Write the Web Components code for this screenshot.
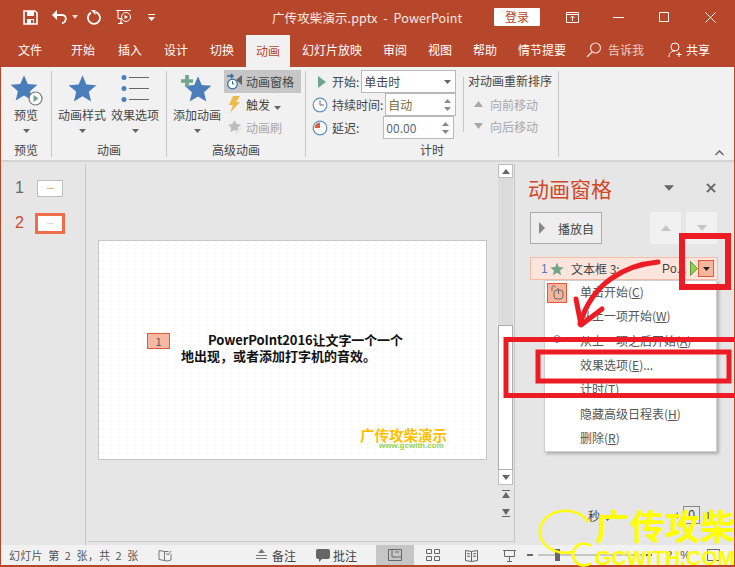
<!DOCTYPE html>
<html lang="zh">
<head>
<meta charset="utf-8">
<title>PowerPoint</title>
<style>
html,body{margin:0;padding:0;width:735px;height:567px;overflow:hidden;background:#e6e6e6}
body{font-family:"Liberation Sans","Noto Sans CJK SC",sans-serif;font-size:12px}
</style>
</head>
<body>
<ppt-app></ppt-app>
<script>
const FONT = '"Noto Sans CJK SC","Liberation Sans",sans-serif'
const RED = '#b7472a'
const star = (s, c = '#4a7ebb') => `<svg width="${s}" height="${s}" viewBox="0 0 24 24" style="display:block"><path fill="${c}" d="M12 1l3.200 7.600 8.300.7-6.300 5.400 1.900 8.100L12 18.500 4.900 22.800l1.900-8.100L.5 9.300l8.300-.7z"/></svg>`
const caret = (c = '#666') => `<svg width="7" height="4" viewBox="0 0 7 4"><path fill="${c}" d="M0 0h7L3.500 4z"/></svg>`
const clock = (hand) => `<svg width="16" height="16" viewBox="0 0 16 16"><circle cx="8" cy="8" r="6.800" fill="#fff" stroke="#5b8fc9" stroke-width="1.200"/>${hand}</svg>`
const spin = `<span class="spin"><svg width="7" height="4" viewBox="0 0 7 4"><path fill="#888" d="M3.500 0L7 4H0z"/></svg><svg width="7" height="4" viewBox="0 0 7 4"><path fill="#888" d="M0 0h7L3.500 4z"/></svg></span>`

class PptTitlebar extends HTMLElement{
    constructor(){
        super()
        this.attachShadow({mode: 'open'}).innerHTML = `
        <style>
            :host{display:flex;align-items:center;height:34px;background:${RED};color:#fff;font-family:${FONT}}
            .qat{display:flex;align-items:center;padding-left:22px;width:271px;box-sizing:border-box}
            .title{width:222px;font-size:12.500px;white-space:pre;letter-spacing:.1px;color:#f8e9e4}
            .login{width:46px;height:18px;background:#fff;color:${RED};font-size:12px;line-height:18px;text-align:center;border-radius:1px}
            .win{display:flex;margin-left:9px}
            .win span{width:46px;height:18px;display:flex;align-items:center;justify-content:center}
            svg{display:block}
        </style>
        <div class="qat">
            <svg width="15" height="15" viewBox="0 0 15 15" style="margin-right:14px"><path fill="none" stroke="#fff" stroke-width="1.600" d="M1 1h11l2 2v11H1z"/><path fill="#fff" d="M4 1h7v5H4zM4 9h7v5H4z"/><path fill="${RED}" d="M8 10h2v3H8z"/></svg>
            <svg width="15" height="14" viewBox="0 0 15 14"><path fill="none" stroke="#fff" stroke-width="1.800" d="M4 5h6c6 0 4 8 0 8"/><path fill="#fff" d="M0 5l5-5v10z"/></svg>
            <svg width="6" height="4" viewBox="0 0 6 4" style="margin:0 9px 0 5px"><path fill="#f3d9d0" d="M0 0h6L3 4z"/></svg>
            <svg width="15" height="15" viewBox="0 0 15 15" style="margin-right:13px"><path fill="none" stroke="#fff" stroke-width="1.800" d="M9 2.200a6 6 0 1 1-5 .4"/><path fill="#fff" d="M4 0h4.500v5z"/></svg>
            <svg width="18" height="16" viewBox="0 0 16 16" style="margin-right:15px"><path fill="none" stroke="#fff" d="M0 1.500h15M2 1.500v8h4M6 13.500h-2M2 14.500h5"/><circle cx="10" cy="8" r="4.500" fill="none" stroke="#fff"/><path fill="#fff" d="M8.500 6l3.500 2-3.500 2z"/><path stroke="#fff" d="M5 10v4"/></svg>
            <svg width="7" height="7" viewBox="0 0 7 7"><path fill="#fff" d="M0 0h7v1H0zM0 3h7L3.500 7z"/></svg>
        </div>
        <div class="title">广传攻柴演示.pptx  -  PowerPoint</div>
        <div class="login">登录</div>
        <div class="win">
            <span><svg width="13" height="11" viewBox="0 0 13 11"><path fill="none" stroke="#fff" d="M.5.500h12v10H.500zM.5 2.500h12M6.500 9V4.500M4.500 6l2-2 2 2"/></svg></span>
            <span><svg width="11" height="1" viewBox="0 0 11 1"><path stroke="#fff" d="M0 .5h11"/></svg></span>
            <span><svg width="10" height="10" viewBox="0 0 10 10"><path fill="none" stroke="#fff" d="M.5.500h9v9h-9z"/></svg></span>
            <span><svg width="11" height="11" viewBox="0 0 11 11"><path fill="none" stroke="#fff" d="M.5.500l10 10M10.500.500l-10 10"/></svg></span>
        </div>`
    }
}
customElements.define('ppt-titlebar', PptTitlebar)

class PptTabs extends HTMLElement{
    constructor(){
        super()
        // label, left edge, width, measured in the reference
        const tabs = [['文件',17,24],['开始',70,24],['插入',117,24],['设计',163,24],['切换',209,24],['动画',245,44],['幻灯片放映',301,60],['审阅',382,24],['视图',427,24],['帮助',472,24],['情节提要',517,48]]
        let x = 0, html = ''
        for (const [t, left, w] of tabs){
            html += `<span class="${t == '动画' ? 'on' : ''}" style="margin-left:${left - x}px;width:${w}px">${t}</span>`
            x = left + w
        }
        this.attachShadow({mode: 'open'}).innerHTML = `
        <style>
            :host{display:flex;align-items:stretch;height:33px;background:${RED};color:#fff;font-family:${FONT};font-size:12px}
            span{display:flex;align-items:center;justify-content:center;white-space:nowrap;padding-bottom:2px;box-sizing:border-box}
            .on{background:#f1f1f1;color:${RED};margin-top:1px;padding-bottom:1px}
            .tell{color:#ecd0c7;margin-left:6px;width:60px;justify-content:flex-start}
            svg{align-self:center;margin-bottom:2px}
        </style>
        <div style="display:flex">${html}</div>
        <svg width="16" height="16" viewBox="0 0 16 16" style="margin-left:20px"><circle cx="9.500" cy="6" r="5" fill="none" stroke="#f3d9d0" stroke-width="1.200"/><path stroke="#f3d9d0" stroke-width="1.400" d="M6 10l-5 5"/></svg>
        <span class="tell">告诉我</span>
        <svg width="15" height="16" viewBox="0 0 15 16"><circle cx="7" cy="5" r="4" fill="none" stroke="#fff"/><path fill="none" stroke="#fff" d="M1 15c0-4 2-6 6-6M11 10v5M8.500 12.500h5"/></svg>
        <span style="margin-left:3px">共享</span>`
    }
}
customElements.define('ppt-tabs', PptTabs)

class RibbonBtn extends HTMLElement{
    constructor(){
        super()
        this.attachShadow({mode: 'open'}).innerHTML = `
        <style>
            :host{display:flex;flex-direction:column;align-items:center;width:48px;font-size:12px;color:#444}
            .ico{height:32px;display:flex;align-items:flex-end;justify-content:center;width:100%}
            .t{height:22px;line-height:22px;white-space:nowrap;margin-top:1px}
            .c{height:4px;line-height:0;margin-top:2px}
        </style>
        <div class="ico"><slot name="icon"></slot></div>
        <div class="t"><slot></slot></div>
        <div class="c">${caret()}</div>`
    }
}
customElements.define('ribbon-btn', RibbonBtn)

class RibbonGroup extends HTMLElement{
    static get observedAttributes(){ return ['label'] }
    constructor(){
        super()
        this.attachShadow({mode: 'open'}).innerHTML = `
        <style>
            :host{display:flex;flex-direction:column;box-sizing:border-box;border-right:1px solid #c6c6c6;height:86px;margin-top:4px;font-family:${FONT}}
            .body{height:71px;display:flex;align-items:flex-start}
            .label{height:15px;line-height:15px;text-align:center;font-size:12px;color:#444}
        </style>
        <div class="body"><slot></slot></div>
        <div class="label"></div>`
    }
    attributeChangedCallback(n, o, v){
        this.shadowRoot.querySelector('.label').textContent = v
    }
}
customElements.define('ribbon-group', RibbonGroup)

class PptRibbon extends HTMLElement{
    constructor(){
        super()
        this.attachShadow({mode: 'open'}).innerHTML = `
        <style>
            :host{display:flex;height:95px;background:#f1f1f1;border-bottom:2px solid #d4d4d4;box-sizing:border-box;position:relative;font-family:${FONT};font-size:12px;color:#444}
            .row{display:flex;align-items:center;white-space:nowrap}
            .side{display:flex;flex-direction:column;margin-left:3px;width:77px;margin-top:-1px}
            .side .row{height:23px;padding-left:3px;gap:4px}
            .side .row:first-child{background:#c6c6c6}
            .grey{color:#a8a8a8}
            .time{display:flex;flex-direction:column;padding-left:6px;width:151px;margin-top:-1px}
            .time .row{height:23px}
            .box{background:#fff;border:1px solid #b9b9b9;box-sizing:border-box;height:23px;display:flex;align-items:center;padding:0 4px 0 2px;justify-content:space-between}
            .spin{display:flex;flex-direction:column;gap:4px}
            .spin svg{display:block}
            .sep{width:1px;background:#c6c6c6;height:55px;margin:6px 4px 0 0;flex:none}
            .order{display:flex;flex-direction:column;margin-top:-1px}
            .order .row{height:22px;gap:7px}
            .chev{position:absolute;left:714px;top:83px}
        </style>
        <ribbon-group label="预览" style="width:51px">
            <ribbon-btn style="margin-left:1px">
                <span slot="icon" style="position:relative;display:block;height:29px;width:32px">${star(28)}<svg style="position:absolute;left:18px;top:17px" width="15" height="15" viewBox="0 0 15 15"><circle cx="7.500" cy="7.500" r="6.500" fill="#fff" stroke="#777" stroke-width="1.200"/><path fill="#6aa886" d="M5.500 4l5 3.500-5 3.500z"/></svg></span>
                预览
            </ribbon-btn>
        </ribbon-group>
        <ribbon-group label="动画" style="width:115px">
            <ribbon-btn style="margin-left:6px">
                <span slot="icon">${star(29)}</span>动画样式
            </ribbon-btn>
            <ribbon-btn style="margin-left:5px">
                <svg slot="icon" width="28" height="28" viewBox="0 0 28 28"><g fill="#4a7ebb"><circle cx="3" cy="2.500" r="2.500"/><circle cx="3" cy="13.500" r="2.500"/><circle cx="3" cy="24.500" r="2.500"/></g><path stroke="#666" d="M8 2.500h20M8 13.500h20M8 24.500h20"/></svg>
                效果选项
            </ribbon-btn>
        </ribbon-group>
        <ribbon-group label="高级动画" style="width:139px">
            <ribbon-btn style="margin-left:6px">
                <span slot="icon" style="position:relative;display:block;margin-left:2px">${star(28)}<svg style="position:absolute;left:-3px;top:0" width="12" height="12" viewBox="0 0 13 13"><path fill="#6fa58a" d="M4.500 0h4v4.500H13v4H8.500V13h-4V8.500H0v-4h4.500z"/></svg></span>
                添加动画
            </ribbon-btn>
            <div class="side">
                <div class="row"><svg width="15" height="17" viewBox="0 0 15 17"><circle cx="5.500" cy="11" r="4.800" fill="#fff" stroke="#2d6ca2" stroke-width="1.200"/><path stroke="#2d6ca2" fill="none" d="M5.500 8v3h2"/><path fill="none" stroke="#2d6ca2" stroke-width="1.400" d="M0 3h6M4 1l2 2-2 2"/><path fill="#666" d="M15 2v10L9 7z"/></svg><span>动画窗格</span></div>
                <div class="row"><svg width="15" height="17" viewBox="0 0 15 17"><path fill="#f0b849" d="M6 0h7L9 6h4L3 17l3-8H2z"/></svg><span>触发</span><span style="margin-left:0">${caret()}</span></div>
                <div class="row grey"><svg width="15" height="17" viewBox="0 0 15 17"><path fill="#bdbdbd" d="M7.500 1l2 4 4.500.6-3.200 3.100.8 4.500-4.100-2.100-4.100 2.100.8-4.500L1 5.600 5.500 5z"/><path fill="#e6e6e6" d="M8 13l6-5 1 2-6 6z"/></svg><span>动画刷</span></div>
            </div>
        </ribbon-group>
        <ribbon-group label="计时" style="width:253px">
            <div class="time">
                <div class="row"><svg width="10" height="12" viewBox="0 0 10 12" style="margin:0 5px 0 5px"><path fill="#6fa58a" d="M1 0l8 6-8 6z"/></svg><span>开始:</span><div class="box" style="width:95px;margin-left:2px"><span>单击时</span>${caret()}</div></div>
                <div class="row">${clock('<path stroke="#666" fill="none" d="M8 3.500V8h4"/>')}<span style="margin-left:4px">持续时间:</span><div class="box" style="width:71px;margin-left:2px"><span style="color:#7a6a3a">自动</span>${spin}</div></div>
                <div class="row">${clock('<path fill="#d9603c" d="M8 8V2.500A5.500 5.500 0 0 0 2.500 8z"/>')}<span style="margin-left:4px">延迟:</span><div class="box" style="width:71px;margin-left:24px;color:#5a6a7a"><span>00.00</span>${spin}</div></div>
            </div>
            <div class="sep"></div>
            <div class="order">
                <div class="row" style="height:20px"><span>对动画重新排序</span></div>
                <div class="row grey" style="padding-left:6px;margin-top:3px"><svg width="9" height="6" viewBox="0 0 9 6"><path fill="#a8a8a8" d="M4.500 0L9 6H0z"/></svg><span>向前移动</span></div>
                <div class="row grey" style="padding-left:6px"><svg width="9" height="6" viewBox="0 0 9 6"><path fill="#a8a8a8" d="M0 0h9L4.500 6z"/></svg><span>向后移动</span></div>
            </div>
        </ribbon-group>
        <svg class="chev" width="9" height="6" viewBox="0 0 9 6"><path fill="none" stroke="#666" stroke-width="1.500" d="M.5 5l4-4 4 4"/></svg>`
    }
}
customElements.define('ppt-ribbon', PptRibbon)

class PptThumbs extends HTMLElement{
    constructor(){
        super()
        this.attachShadow({mode: 'open'}).innerHTML = `
        <style>
            :host{display:flex;flex-direction:column;width:85px;box-sizing:border-box;border-right:1px solid #c6c6c6;margin-top:2px;padding:13px 0 0 14px;gap:13px;font-family:"Liberation Sans",sans-serif;font-size:16px;color:#666}
            .t{display:flex;align-items:center;height:22px}
            .n{width:22px}
            .p{background:#fff;border:1px solid #bdbdbd;width:26px;height:17px;box-sizing:border-box;display:flex;align-items:center;justify-content:center}
            .p i{width:7px;height:1px;background:#e5b560;display:block}
            .cur{color:#d24726}
            .cur .p{border:3px solid #ef6d4a;width:30px;height:21px;margin-left:-2px}
            .cur .p i{background:#d8d8d8}
        </style>
        <div class="t"><span class="n">1</span><div class="p"><i></i></div></div>
        <div class="t cur"><span class="n">2</span><div class="p"><i></i></div></div>`
    }
}
customElements.define('ppt-thumbs', PptThumbs)

class PptSlide extends HTMLElement{
    constructor(){
        super()
        this.attachShadow({mode: 'open'}).innerHTML = `
        <style>
            :host{display:block;flex:none;width:387px;height:218px;margin:77px 0 0 11px;position:relative;background-color:#fff;background-image:radial-gradient(#e9e9e9 .6px,transparent .8px);background-size:8px 8px;outline:1px solid #c6c6c6;font-family:${FONT}}
            .tag{position:absolute;left:48px;top:92px;width:23px;height:16px;background:#f5b9a2;border:1px solid #e0593a;box-sizing:border-box;text-align:center;font-size:11px;line-height:14px;color:#555}
            .text{position:absolute;left:82px;top:91px;width:240px;font-size:13px;font-weight:700;color:#111}
            .text div{height:16px;line-height:16px;white-space:nowrap}
            .logo{position:absolute;left:261px;top:185px;color:#ffc000;font-size:14.500px;font-weight:700;line-height:18px;white-space:nowrap}
            .www{position:absolute;left:280px;top:200px;color:#92d050;font:700 8px "Liberation Sans",sans-serif}
        </style>
        <div class="tag">1</div>
        <div class="text"><div style="padding-left:27px;letter-spacing:-.1px">PowerPoInt2016让文字一个一个</div><div>地出现，或者添加打字机的音效。</div></div>
        <div class="logo">广传攻柴演示</div>
        <div class="www">www.gcwith.com</div>`
    }
}
customElements.define('ppt-slide', PptSlide)

class PptScrollbar extends HTMLElement{
    constructor(){
        super()
        this.attachShadow({mode: 'open'}).innerHTML = `
        <style>
            :host{display:flex;flex-direction:column;width:15px;flex:none;margin-left:12px;font-size:0}
            .b{height:14px;background:#fff;display:flex;align-items:center;justify-content:center;border:1px solid #bdbdbd;box-sizing:border-box}
            .track{height:147px;background:#dcdcdc}
            .thumb{height:145px;background:#fff;border:1px solid #adadad;box-sizing:border-box}
            .dn{height:15px;border-top:0}
            .pg{height:18px;display:flex;align-items:center;justify-content:center}
        </style>
        <div class="b"><svg width="8" height="5" viewBox="0 0 8 5"><path fill="#666" d="M4 0l4 5H0z"/></svg></div>
        <div class="track"></div>
        <div class="thumb"></div>
        <div class="b dn"><svg width="8" height="5" viewBox="0 0 8 5"><path fill="#666" d="M0 0h8L4 5z"/></svg></div>
        <div class="pg"><svg width="8" height="9" viewBox="0 0 8 9"><path fill="#666" d="M0 0h8v1H0zM4 2l4 6H0z"/></svg></div>
        <div class="pg"><svg width="8" height="9" viewBox="0 0 8 9"><path fill="#666" d="M0 1h8L4 7zM0 8h8v1H0z"/></svg></div>`
    }
}
customElements.define('ppt-scrollbar', PptScrollbar)

class PptPane extends HTMLElement{
    constructor(){
        super()
        this.attachShadow({mode: 'open'}).innerHTML = `
        <style>
            :host{display:flex;flex-direction:column;flex:1;padding:14px 0 0 13px;box-sizing:border-box;position:relative;font-family:${FONT};font-size:12px;color:#444}
            .head{display:flex;align-items:center;height:24px;color:#d24726;font-size:21px;white-space:nowrap}
            .tools{display:flex;align-items:center;height:32px;margin:12px 0 0 2px}
            .play{width:72px;height:32px;box-sizing:border-box;border:1px solid #ababab;background:#eee;display:flex;align-items:center;padding-left:8px;gap:13px;margin-right:48px}
            .sq{width:31px;height:32px;background:#f1f1f1;display:flex;align-items:center;justify-content:center;margin-right:5px}
            .item{display:flex;align-items:center;height:23px;width:188px;margin:13px 0 0 2px;background:#fde4dc;border:1px solid #f5bda6;box-sizing:border-box;padding-left:10px;white-space:nowrap}
            .foot{position:absolute;left:73px;top:344px;display:flex;align-items:center;white-space:nowrap}
            .zero{width:17px;height:18px;border:1px solid #888;box-sizing:border-box;text-align:center;line-height:16px;font-family:"Liberation Sans",sans-serif}
        </style>
        <div class="head"><span>动画窗格</span>
            <svg style="margin-left:52px" width="10" height="6" viewBox="0 0 11 6"><path fill="#666" d="M0 0h11L5.500 6z"/></svg>
            <svg style="margin-left:32px" width="10" height="10" viewBox="0 0 11 11"><path fill="none" stroke="#666" stroke-width="2.200" d="M1 1l9 9M10 1l-9 9"/></svg>
        </div>
        <div class="tools">
            <div class="play"><svg width="6" height="12" viewBox="0 0 6 12"><path fill="#888" d="M0 0l6 6-6 6z"/></svg><span>播放自</span></div>
            <div class="sq"><svg width="10" height="6" viewBox="0 0 10 6"><path fill="#c6c6c6" d="M5 0l5 6H0z"/></svg></div>
            <div class="sq"><svg width="10" height="6" viewBox="0 0 10 6"><path fill="#c6c6c6" d="M0 0h10L5 6z"/></svg></div>
        </div>
        <div class="item">
            <span style="color:#4a7ebb;width:6px;margin-right:3px;font-family:'Liberation Sans',sans-serif">1</span>
            ${star(14, '#6fa58a')}
            <span style="margin-left:7px;width:91px">文本框 3:</span>
            <span style="font-family:'Liberation Sans',sans-serif;width:28px">Po...</span>
            <svg width="8" height="15" viewBox="0 0 8 15"><path fill="#92d050" stroke="#5a9a3a" d="M.5.500l7 7-7 7z"/></svg>
            <div style="width:16px;height:17px;background:#f5b69d;border:1px solid #e0593a;box-sizing:border-box;display:flex;align-items:center;justify-content:center">${caret('#222')}</div>
        </div>
        <div class="foot"><span>秒</span><span style="margin-left:4px">${caret()}</span>
            <svg style="margin-left:62px" width="5" height="7" viewBox="0 0 5 7"><path fill="#888" d="M5 0v7L0 3.500z"/></svg>
            <div class="zero" style="margin-left:5px">0</div>
            <svg style="margin-left:7px" width="2" height="7" viewBox="0 0 2 7"><path fill="#888" d="M0 0h2v7H0z"/></svg>
        </div>
        <slot></slot>`
    }
}
customElements.define('ppt-pane', PptPane)

class PptMenu extends HTMLElement{
    constructor(){
        super()
        const items = ['单击开始(<u>C</u>)','从上一项开始(<u>W</u>)','从上一项之后开始(<u>A</u>)','效果选项(<u>E</u>)...','计时(<u>T</u>)','隐藏高级日程表(<u>H</u>)','删除(<u>R</u>)']
        this.attachShadow({mode: 'open'}).innerHTML = `
        <style>
            :host{position:absolute;left:29px;top:118px;width:173px;height:172px;background:#fff;border:1px solid #d0d0d0;box-sizing:border-box;box-shadow:2px 2px 3px rgba(0,0,0,.25);font-size:12px;color:#555;display:flex;flex-direction:column}
            .list{margin-top:-1.500px}
            .i{height:24.300px;display:flex;align-items:center;padding-left:35px;white-space:nowrap;position:relative}
            .m{position:absolute;left:2px;top:3px;width:20px;height:20px;background:#f5b69d;border:1px solid #e0593a;box-sizing:border-box;display:flex;align-items:center;justify-content:center}
            .dot{position:absolute;left:8px;top:7px;width:8px;height:8px;border:1px solid #5b8fc9;border-radius:50%;box-sizing:border-box}
        </style>
        <div class="list">${items.map((t, i) => `<div class="i">${i == 0 ? '<div class="m"><svg width="13" height="15" viewBox="0 0 13 15"><rect x="3" y="5" width="9" height="9" rx="3" fill="none" stroke="#666"/><path fill="none" stroke="#666" d="M7.500 5V9M1 6V2.500C1 0 4 0 4 2.500M7 5V3"/></svg></div>' : ''}${i == 2 ? '<span class="dot"></span>' : ''}<span>${t}</span></div>`).join('')}</div>`
    }
}
customElements.define('ppt-menu', PptMenu)

class PptStatus extends HTMLElement{
    constructor(){
        super()
        this.attachShadow({mode: 'open'}).innerHTML = `
        <style>
            :host{display:flex;align-items:center;height:20px;background:#f1f1f1;font-family:${FONT};font-size:11px;color:#555;white-space:nowrap;padding-left:8px;box-sizing:border-box}
            .v{height:20px;width:38px;display:flex;align-items:center;justify-content:center;flex:none}
            .on{background:#c6c6c6}
            svg{display:block;flex:none}
        </style>
        <span style="width:149px;letter-spacing:.3px;word-spacing:2.500px">幻灯片 第 2 张，共 2 张</span>
        <svg width="14" height="13" viewBox="0 0 14 13"><path fill="none" stroke="#777" d="M6.500 2.500L1 1.500v9l5.500 1zM6.500 2.500h4M9 12l-2.500-.5V9M13 5v6l-4 1"/><path fill="none" stroke="#777" d="M8 4l2 2 3-4"/></svg>
        <svg style="margin-left:84px" width="11" height="12" viewBox="0 0 11 12"><path fill="#777" d="M5.500 0L9 4H2z"/><path stroke="#777" d="M0 6.500h11M0 9.500h11"/></svg>
        <span style="margin-left:5px;font-size:12px;color:#444">备注</span>
        <svg style="margin-left:20px" width="14" height="13" viewBox="0 0 14 13"><path fill="#666" d="M2 0h10q2 0 2 2v6q0 2-2 2H6l-3 3v-3H2q-2 0-2-2V2q0-2 2-2z"/></svg>
        <span style="margin-left:3px;font-size:12px;color:#444">批注</span>
        <div class="v on" style="margin-left:19px"><svg width="14" height="12" viewBox="0 0 14 12"><path fill="none" stroke="#666" d="M.5.500h13v11H.500zM4 .5v7.500h9.500M7 3h4"/></svg></div>
        <div class="v"><svg width="14" height="12" viewBox="0 0 14 12"><path fill="none" stroke="#666" d="M.5.500h5v4h-5zM8.500.500h5v4h-5zM.5 7.500h5v4h-5zM8.500 7.500h5v4h-5z"/></svg></div>
        <div class="v"><svg width="13" height="13" viewBox="0 0 13 13"><path fill="none" stroke="#666" d="M.5 1.500l6 1 6-1v10l-6 1-6-1zM6.500 2.500v10M2 4.500l3 .5M2 7l3 .5M8 5l3-.5M8 7.500l3-.5"/></svg></div>
        <div class="v"><svg width="13" height="13" viewBox="0 0 13 13"><path fill="none" stroke="#666" d="M0 1.500h13M1.500 1.500v6h10v-6M6.500 7.500V12M4 12.500h5"/></svg></div>
        <svg style="margin-left:-1px" width="6" height="2" viewBox="0 0 6 2"><path fill="#666" d="M0 0h6v2H0z"/></svg>
        <div style="position:relative;width:104px;height:2px;background:#c6c6c6;margin:0 4px 0 5px;flex:none"><i style="position:absolute;left:17px;top:-5px;width:5px;height:12px;background:#666;display:block"></i></div>
        <svg width="6" height="6" viewBox="0 0 6 6"><path fill="#666" d="M2 0h2v2h2v2H4v2H2V4H0V2h2z"/></svg>
        <span style="margin-left:14px;font-family:'Liberation Sans',sans-serif;word-spacing:5px">? %</span>
        <svg style="margin-left:17px" width="13" height="12" viewBox="0 0 13 12"><path fill="none" stroke="#666" d="M.5.500h12v11H.500z"/></svg>`
    }
}
customElements.define('ppt-status', PptStatus)

class PptOverlay extends HTMLElement{
    constructor(){
        super()
        this.attachShadow({mode: 'open'}).innerHTML = `
        <style>
            :host{position:absolute;left:-1px;top:0;width:735px;height:567px;pointer-events:none;overflow:hidden;font-family:${FONT}}
            svg{position:absolute;left:0;top:0}
            .wm{position:absolute;left:595px;top:500px;font-size:35px;font-weight:700;color:#ffff00;white-space:nowrap;line-height:50px}
            .url{position:absolute;left:595px;top:545px;font:700 21px "Liberation Sans",sans-serif;color:#ffff00;white-space:nowrap;line-height:26px}
        </style>
        <svg width="735" height="567" viewBox="0 0 735 567">
            <g fill="none" stroke="#ed1c24">
                <path stroke-width="6" d="M682 236h46v51h-46z"/>
                <path stroke-width="5" d="M506 339.500h232v56H506z"/>
                <path stroke-width="5" d="M538 352h191v29H538z"/>
                <path stroke-width="5" stroke-linecap="round" d="M658 262c-32 3-66 20-78 62"/>
                <path stroke-width="5" stroke-linecap="round" stroke-linejoin="round" d="M576 299l5 26 21-16"/>
            </g>
            <g fill="none" stroke="#ffff00" stroke-width="2.500">
                <path d="M588 522A25.500 21 0 1 0 572 552"/>
                <path d="M591 546A11 11 0 1 0 591 563"/>
            </g>
        </svg>
        <div class="wm">广传攻柴</div>
        <div class="url">GCWITH.COM</div>`
    }
}
customElements.define('ppt-overlay', PptOverlay)

class PptApp extends HTMLElement{
    constructor(){
        super()
        this.attachShadow({mode: 'open'}).innerHTML = `
        <style>
            :host{display:flex;flex-direction:column;width:735px;height:567px;box-sizing:border-box;border:solid ${RED};border-width:0 1px 2px 1px;position:relative;background:#e6e6e6}
            .main{display:flex;height:383px;background:#e6e6e6}
            .stage{display:flex;width:427px;flex:none;margin:2px 0 0 2px;border-bottom:1px solid #c6c6c6;border-right:1px solid #c6c6c6;box-sizing:border-box;height:378px}
        </style>
        <ppt-titlebar></ppt-titlebar>
        <ppt-tabs></ppt-tabs>
        <ppt-ribbon></ppt-ribbon>
        <div class="main">
            <ppt-thumbs></ppt-thumbs>
            <div class="stage"><ppt-slide></ppt-slide><ppt-scrollbar></ppt-scrollbar></div>
            <ppt-pane><ppt-menu></ppt-menu></ppt-pane>
        </div>
        <ppt-status></ppt-status>
        <ppt-overlay></ppt-overlay>`
    }
}
customElements.define('ppt-app', PptApp)
</script>
</body>
</html>
